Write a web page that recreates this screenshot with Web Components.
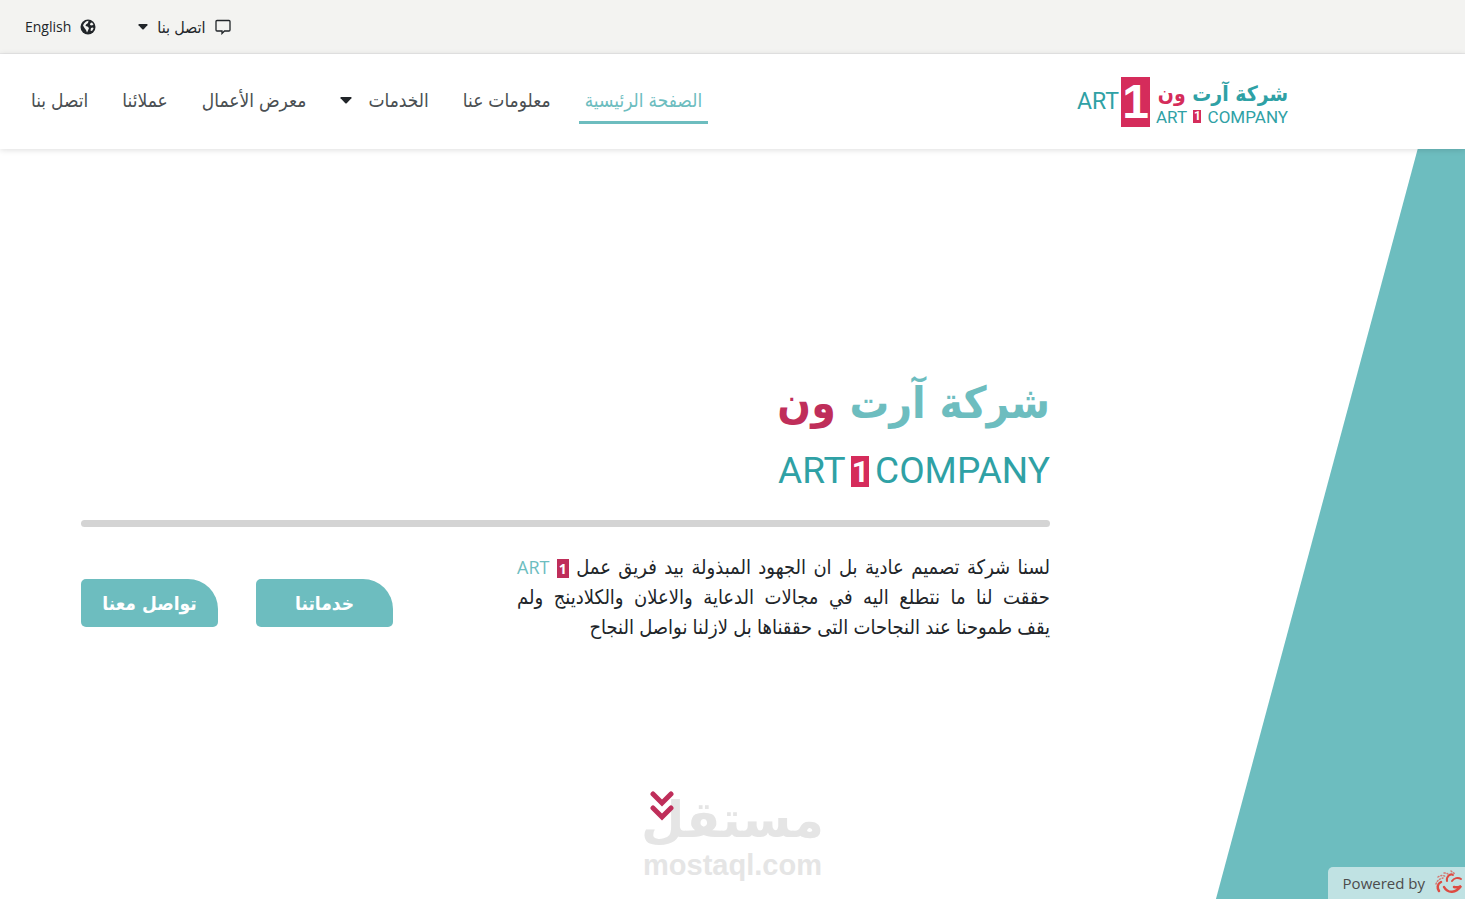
<!DOCTYPE html>
<html lang="ar" dir="rtl">
<head>
<meta charset="utf-8">
<meta name="viewport" content="width=device-width, initial-scale=1">
<title>شركة آرت ون</title>
<style>
  body { margin: 0; background: #fff; color: #212529; font-family: "Open Sans", "DejaVu Sans Condensed", "DejaVu Sans", sans-serif;
    --teal: #6dbdbf; --deep: #2fa1a5; --pink: #d52c5b; --crimson: #bf2e5a; }
</style>
</head>
<body>
<art-page></art-page>
<script>
const define = (name, html) => {
  const template = document.createElement('template');
  template.innerHTML = html;
  customElements.define(name, class extends HTMLElement {
    constructor() {
      super();
      this.attachShadow({ mode: 'open' }).append(template.content.cloneNode(true));
    }
  });
};

define('word-mark', `
<style>
  :host { display: flex; direction: ltr; align-items: center; justify-content: space-between; color: var(--deep);
    font: 17px/16px Roboto, sans-serif; }
  b { display: block; background: var(--pink); color: #fff; text-align: center; width: 8px; font-size: 12px; line-height: 13px; }
  :host([large]) { font-size: 37px; line-height: 32px; }
  :host([large]) b { width: 18px; font-size: 30px; line-height: 31px; }
</style>
<span>ART</span><b>1</b><span>COMPANY</span>`);

define('brand-logo', `
<style>
  :host { display: block; }
  a { display: flex; direction: ltr; align-items: center; color: var(--deep); text-decoration: none; }
  .art { width: 44px; font: 23px/50px Roboto, sans-serif; }
  .one { width: 29px; background: var(--pink); color: #fff; text-align: center; font: bold 48px/50px "Liberation Sans", sans-serif; }
  .names { width: 132px; margin-left: 6px; }
  .ar { direction: rtl; display: block; white-space: nowrap; font: bold 21px/30px "DejaVu Sans Condensed", "DejaVu Sans", sans-serif; }
  .ar i { font-style: normal; color: var(--pink); }
</style>
<a href="#"><span class="art">ART</span><span class="one">1</span>
<span class="names"><span class="ar">شركة آرت <i>ون</i></span><word-mark></word-mark></span></a>`);

define('top-bar', `
<style>
  :host { display: flex; direction: ltr; align-items: center; gap: 42px; height: 53px; padding: 0 25px; background: #f3f3f1; border-bottom: 1px solid #e8e8e8; font-size: 14px; }
  a, button { display: flex; align-items: center; gap: 9px; color: inherit; font: inherit; text-decoration: none; background: none; border: 0; padding: 0; }
  button span { font-size: 16px; line-height: 20px; }
  svg { display: block; }
</style>
<a href="#">English <svg width="16" height="16" viewBox="0 0 16 16"><circle cx="8" cy="8" r="7.5" fill="#212529"/><path d="M6 2.500 8.500 1.800 8 4 6 5.500 5.500 7l2 .500L9 9l-1 2.500-1 2-1-2.500-1.500-2L3 6.500l1-2zM10.500 4l1.500-.500 1.500 2-1.500 1-2-.500zM11 9l2-.500.500 1-1.500 2.500-1.500-.500z" fill="#f3f3f1"/></svg></a>
<button type="button"><svg width="10" height="6" viewBox="0 0 10 6"><path d="M1 0h8q1 .500.400 1.200L5.700 5.200q-.700.600-1.400 0L.600 1.200Q0 .500 1 0z" fill="#212529"/></svg><span dir="rtl">اتصل بنا</span>
<svg width="16" height="16" viewBox="0 0 16 16" fill="none" stroke="#212529" stroke-width="1.300"><path d="M2 1.500h12a1 1 0 0 1 1 1v8.500a1 1 0 0 1-1 1H9.500L7 14.500V12H2a1 1 0 0 1-1-1V2.500a1 1 0 0 1 1-1z"/></svg></button>`);

define('nav-item', `
<style>
  :host { display: block; }
  a { display: flex; align-items: center; gap: 16px; padding: 0 6px; height: 42px; border-bottom: 3px solid transparent; color: #4a4f52; text-decoration: none; white-space: nowrap; font-size: 19px; }
  :host([current]) a { color: var(--teal); border-color: var(--teal); }
  svg { display: none; }
  :host([menu]) svg { display: block; }
</style>
<a href="#"><slot></slot><svg width="12" height="7" viewBox="0 0 12 7"><path d="M1 0h10q1 .500.400 1.300L6.700 6.200q-.700.600-1.400 0L.600 1.300Q0 .500 1 0z" fill="#212529"/></svg></a>`);

define('site-header', `
<style>
  :host { display: flex; align-items: center; justify-content: space-between; height: 95px; padding: 0 177px 0 25px; background: #fff; box-shadow: 0 1px 6px #0002; position: relative; z-index: 1; }
  nav { display: flex; gap: 22px; }
</style>
<brand-logo></brand-logo>
<nav><nav-item current>الصفحة الرئيسية</nav-item><nav-item>معلومات عنا</nav-item><nav-item menu>الخدمات</nav-item><nav-item>معرض الأعمال</nav-item><nav-item>عملائنا</nav-item><nav-item>اتصل بنا</nav-item></nav>`);

define('cta-button', `
<style>
  :host { display: block; }
  button { width: 137px; height: 48px; border: 0; border-radius: 5px 30px 5px 5px; background: var(--teal); color: #fff; padding: 0; font: bold 19px "DejaVu Sans Condensed", "DejaVu Sans", sans-serif; }
</style>
<button type="button"><slot></slot></button>`);

define('mostaql-mark', `
<style>
  :host { display: block; text-align: center; color: #e5e5e5; white-space: nowrap; }
  .ar { display: block; font: bold 50px/58px "DejaVu Sans", sans-serif; }
  .en { display: block; direction: ltr; font: bold 29px/32px "Liberation Sans", sans-serif; }
</style>
<span class="ar">مستقل</span><span class="en">mostaql.com</span>`);

define('powered-by', `
<style>
  :host { display: flex; direction: ltr; align-items: center; gap: 9px; box-sizing: border-box; height: 32px; padding-left: 15px; background: #c0e2e3; border-radius: 5px 0 0 0; color: #4c4c4c; font: 15px "Open Sans", sans-serif; }
</style>
<span>Powered by</span>
<svg width="31" height="28" viewBox="0 0 31 28" fill="none" stroke="#dd4b42" stroke-linecap="round"><path d="M13 12c-1-4 3-8 6-6M18 12c2-3 6-4 9-2" stroke-width="2"/><path d="M10 18c4 7 12 6 17-1-2 1-4 2-7 1" stroke-width="2.500"/><path d="M7 13c-4 2-4 6-2 9" stroke-width="2.500"/><path d="M2 15c1-3 3-5 7-6M4 8c3-2 6-2 8 0M10 4c3 0 4 1 6 2M17 2l4 3" stroke-width="1.500" stroke-dasharray="1 2" opacity=".7"/></svg>`);

define('hero-section', `
<style>
  :host { display: block; flex: 1; position: relative; background: #fff; }
  .slant { position: absolute; inset: 0 0 0 auto; width: 17%; background: var(--teal); clip-path: polygon(81% 0, 100% 0, 100% 100%, 0 100%); }
  .content { position: relative; margin: 0 415px 0 81px; padding-top: 220px; }
  h1 { margin: 0; width: 272px; font: bold 44px/68px "DejaVu Sans Condensed", "DejaVu Sans", sans-serif; color: var(--teal); white-space: nowrap; }
  h1 span { color: var(--crimson); }
  word-mark { width: 272px; margin-top: 18px; }
  hr { height: 7px; margin: 33px 0 25px; border: 0; border-radius: 4px; background: #d4d4d4; }
  .row { display: flex; justify-content: space-between; align-items: center; }
  p { width: 533px; margin: 0; font-size: 20px; line-height: 30px; }
  .line { display: block; text-align: justify; text-align-last: justify; }
  .line:last-child { text-align-last: start; }
  .art { color: var(--teal); font-size: 18px; }
  p b { display: inline-block; padding: 0 2px; background: var(--crimson); color: #fff; font-size: 14px; line-height: 19px; }
  .actions { display: flex; gap: 38px; margin-top: 12px; }
  .down { display: block; margin: 149px auto 0 calc(44% + 143px); padding: 0; border: 0; background: none; }
  .down svg { display: block; }
  mostaql-mark { position: absolute; left: 0; right: 0; bottom: 18px; }
  powered-by { position: absolute; right: 0; bottom: 0; }
</style>
<div class="slant"></div>
<mostaql-mark></mostaql-mark>
<div class="content">
  <h1>شركة آرت <span>ون</span></h1>
  <word-mark large></word-mark>
  <hr>
  <div class="row">
    <p><span class="line">لسنا شركة تصميم عادية بل ان الجهود المبذولة بيد فريق عمل <b>1</b> <span class="art">ART</span></span>
    <span class="line">حققت لنا ما نتطلع اليه في مجالات الدعاية والاعلان والكلادينج ولم</span>
    <span class="line">يقف طموحنا عند النجاحات التى حققناها بل لازلنا نواصل النجاح</span></p>
    <div class="actions"><cta-button>خدماتنا</cta-button><cta-button>تواصل معنا</cta-button></div>
  </div>
  <button class="down" type="button" aria-label="التالي"><svg width="24" height="30" viewBox="0 0 24 30" fill="none" stroke="#bf2e5a" stroke-width="5" stroke-linecap="round"><path d="M3 3l9 9 9-9M3 17l9 9 9-9"/></svg></button>
</div>
<powered-by></powered-by>`);

define('art-page', `
<style>:host { display: flex; flex-direction: column; min-height: 100vh; }</style>
<top-bar></top-bar><site-header></site-header><hero-section></hero-section>`);
</script>
</body>
</html>
